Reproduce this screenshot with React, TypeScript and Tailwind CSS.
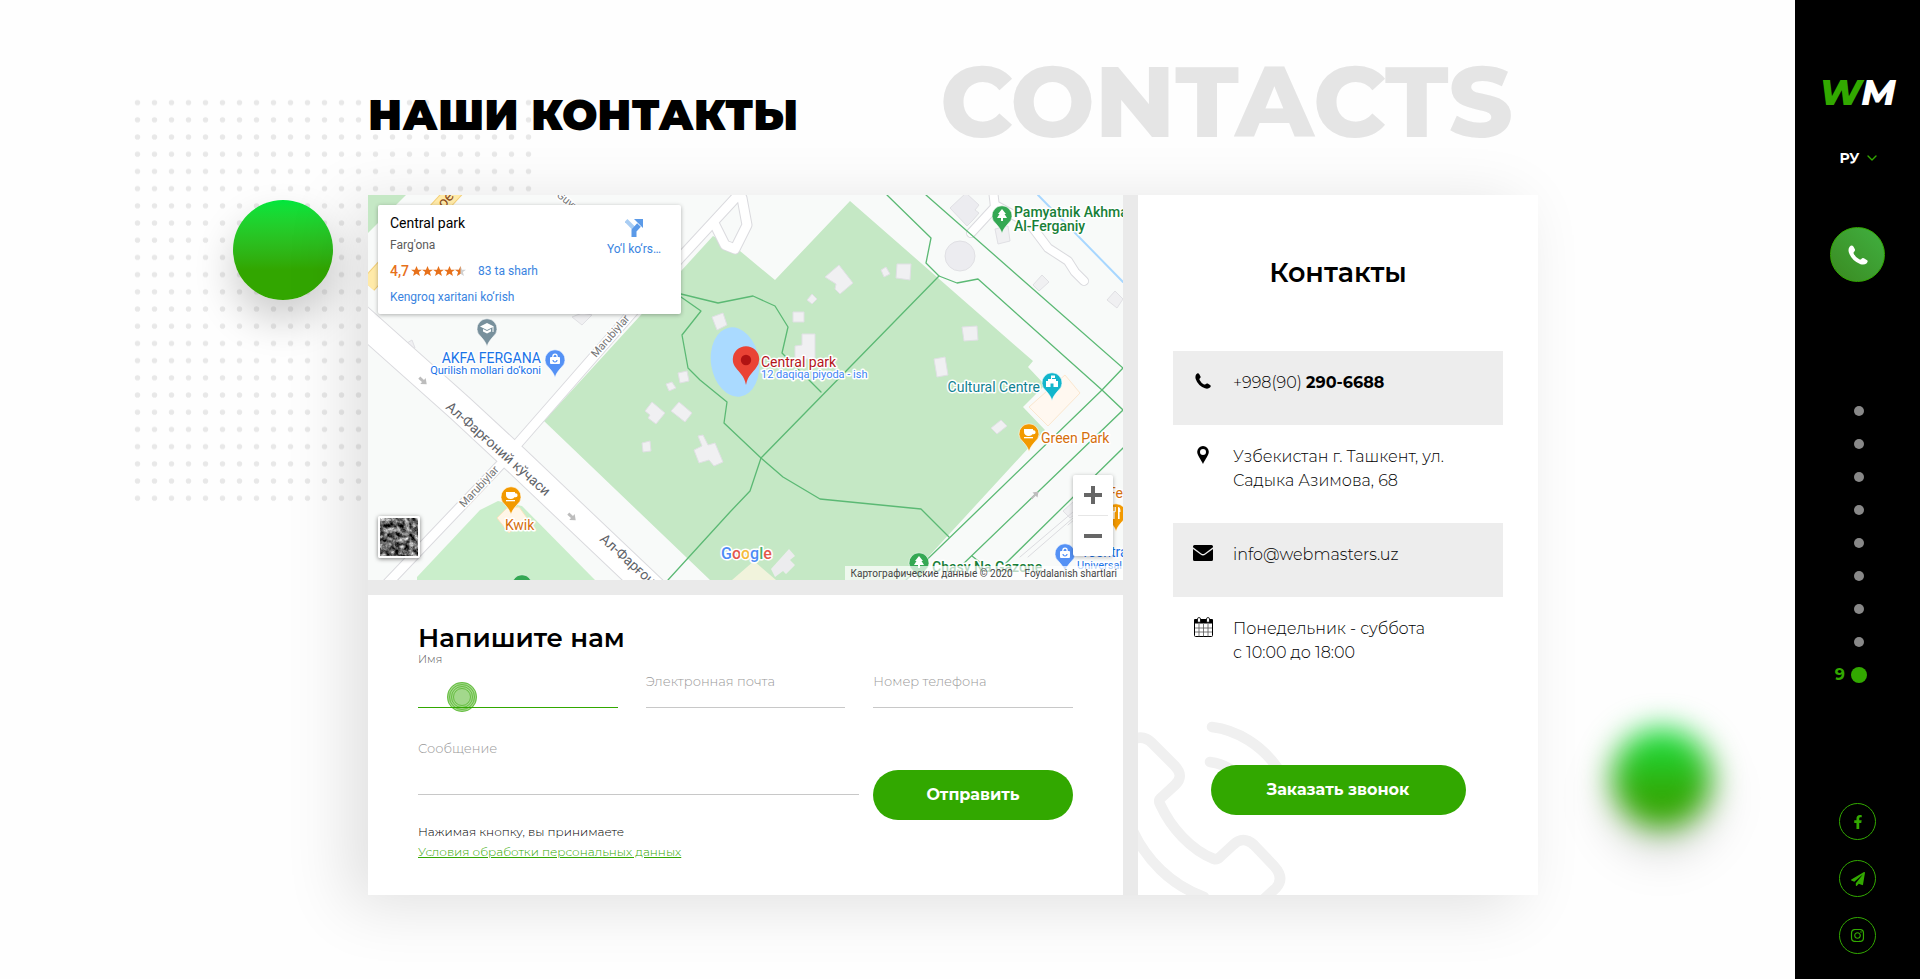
import React from "react";
import { FaFacebookF, FaInstagram, FaPaperPlane } from "react-icons/fa";
import { ChevronDown } from "lucide-react";

const GREEN_PATHS = [
  "313,99 350,108 385,101 407,111 420,132 414,158 453,197",
  "313,102 333,116 314,140 320,173 332,185 359,207 356,228 393,263",
  "393,263 415,282 452,304 553,314 581,342",
  "393,263 571,81",
  "393,263 382,296 362,317 300,385",
  "519,0 563,43 558,68 571,81 589,88 610,84 734,195 755,215",
  "558,0 755,173 734,195 538,385",
  "755,215 592,372",
  "604,361 619,373",
  "755,253 634,372",
];

const BUILDINGS = [
  "344,122 355,118 359,130 349,135",
  "310,178 319,176 321,186 312,188",
  "298,189 304,187 308,193 301,196",
  "277,216 284,207 297,218 288,229 280,223 282,220",
  "303,216 311,207 324,218 317,227",
  "274,248 282,246 283,256 275,257",
  "330,241 335,240 340,250 347,248 355,267 346,271 341,265 331,268 326,255 334,251",
  "457,82 471,70 485,88 472,99 467,94 468,89",
  "513,75 518,72 522,79 516,82",
  "529,69 543,69 542,85 528,83",
  "439,105 444,99 449,104 444,109",
  "425,117 436,117 436,127 425,127",
  "434,139 447,139 447,164 427,164 427,151 434,150",
  "594,132 609,131 610,145 596,146",
  "566,164 577,162 580,180 569,182",
  "623,233 633,225 639,231 629,239",
  "665,90 674,80 681,87 671,96",
  "739,105 747,96 755,104 749,113",
  "627,34 640,31 642,46 630,49",
  "39,148 44,145 47,153 41,155",
  "204,122 214,118 224,120 214,130",
];

const HALO = "stroke-white [paint-order:stroke] [stroke-linejoin:round] [stroke-width:3px]";

type PinKind = "cup" | "bag" | "tree" | "school" | "castle" | "food" | "none";

function Glyph({ kind }: { kind: PinKind }) {
  switch (kind) {
    case "cup":
      return (
        <g>
          <path d="M-5 -4h9v1.200h.6a1.700 1.700 0 0 1 0 4h-1.200a4 2.500 0 0 1-3.400 1.800 4.500 4 0 0 1-5-4z" fill="#fff" />
          <rect x="-5" y="4" width="9" height="1.300" fill="#fff" />
        </g>
      );
    case "bag":
      return (
        <g fill="none" stroke="#fff">
          <rect x="-5" y="-2" width="10" height="7" rx="1" fill="#fff" stroke="none" />
          <path d="M-2.200 -2a2.200 2.800 0 0 1 4.400 0" strokeWidth="1.300" />
          <path d="M-2 1a2 2 0 0 0 4 0" stroke="#5491f5" strokeWidth="1.200" />
        </g>
      );
    case "tree":
      return <path d="M0 -6 4 -1H2.500L5 3H1v3h-2V3h-4l2.500-4H-4z" fill="#fff" />;
    case "school":
      return (
        <g fill="#fff">
          <path d="M0 -5 7 -1.500 0 2 -7 -1.500z" />
          <path d="M-4 1v2.500L0 5.500l4-2V1L0 3z" />
          <rect x="5.500" y="-1" width="1" height="5" />
        </g>
      );
    case "castle":
      return <path d="M-6 5V-1h2v-2h3v-3.500H3V-4H0v1h4v2h2v6H1.500V1.500h-3V5z" fill="#fff" />;
    case "food":
      return <path d="M-4 -6v4.500l1.200 1V6h1.400V-.5l1.200-1V-6h-.8v4h-.6v-4h-.8v4h-.6v-4zM2 -6c2 0 2.500 2 2.500 5H3.600v7H2z" fill="#fff" />;
    default:
      return null;
  }
}

function Pin({ x, y, color, kind }: { x: number; y: number; color: string; kind: PinKind }) {
  return (
    <g transform={`translate(${x} ${y})`}>
      <path
        d="M0 18.500C-1.500 13.800-3.500 11.800-6.200 8.600A10 10 0 1 1 6.200 8.600C3.500 11.800 1.500 13.800 0 18.500z"
        fill={color}
        stroke="#fff"
        strokeWidth="0.600"
      />
      <Glyph kind={kind} />
    </g>
  );
}

function MapCanvas() {
  return (
    <svg
      viewBox="0 0 755 385"
      preserveAspectRatio="xMidYMid slice"
      className="block h-full w-full font-['Roboto',sans-serif] text-[14px]"
      role="img"
      aria-label="Central park"
    >
      <rect width="755" height="385" fill="#f8faf9" />
      <path d="M0 0H38L0 38z" fill="#c5e8c5" />
      <path d="M92 -8 0 92" transform="translate(0 -2)" stroke="#f3cf78" strokeWidth="17" />
      <path d="M92 -8 0 92" transform="translate(0 -2)" stroke="#ffeaa8" strokeWidth="15" />
      <path d="M176 226 345 41 372 56 407 85 482 6 665 166 660 172 677 190 655 212 677 235 539 385H342z" fill="#c5e8c5" />
      <path d="M49 382 112 315 130 306 154 311 227 385H49z" fill="#caeecb" />
      <path d="M364 385 386 366 408 385z" fill="#f1f3dc" />
      <path d="M403 374 421 354 427 361 422 365 427 370 418 379 415 376 407 382z" fill="#ececee" />
      <path d="M661 212 697 180 712 198 680 231z" fill="#fff8f0" stroke="#fbe7cf" />
      <path d="M129 323 139 313 151 312 159 323 141 338z" fill="#fff6e8" stroke="#fbe3bd" />
      <g fill="#f0f0f2" stroke="#e0e0e4">
        {BUILDINGS.map((p) => (
          <polygon key={p} points={p} />
        ))}
        <path d="M582 13 598 -2 611 10 607 15 611 18 605 25 599 31z" fill="#ececf0" />
        <circle cx="592" cy="61" r="15" fill="#ececf0" />
        <path d="M695 316 705 307 712 316 702 323z" />
      </g>
      <ellipse cx="367" cy="167" rx="24" ry="35" transform="rotate(-9 367 167)" fill="#aadaff" />

      <g fill="none" strokeLinejoin="round" strokeLinecap="round">
        <path d="M705 317 652 362M705 323 660 362M735 300 700 330" stroke="#dcdce0" />
        <path d="M625 -5 627 12 603 38M627 10 662 29 680 53 700 66 707 77 716 86" stroke="#dadade" strokeWidth="10" />
        <path d="M625 -5 627 12 603 38M627 10 662 29 680 53 700 66 707 77 716 86" stroke="#fff" strokeWidth="8" />
        <path d="M145 254 312 63 373 -3M347 30 357 50 367 54 379 30 374 3" stroke="#dadade" strokeWidth="11" />
        <path d="M136 266 18 390" stroke="#dadade" strokeWidth="11" />
        <path d="M-10 122 92 213 147 264 285 395" stroke="#dadade" strokeWidth="29" />
        <path d="M-10 122 92 213 147 264 285 395" stroke="#fff" strokeWidth="27" />
        <path d="M145 254 312 63 373 -3M347 30 357 50 367 54 379 30 374 3" stroke="#fff" strokeWidth="9" />
        <path d="M136 266 18 390" stroke="#fff" strokeWidth="9" />
        <path d="M670 0 755 87" stroke="#a8d7ff" strokeWidth="2" />
        <g stroke="#5bb974" strokeWidth="1.300">
          {GREEN_PATHS.map((p) => (
            <polyline key={p} points={p} />
          ))}
        </g>
      </g>
      <g fill="#bdbdbd">
        <path d="M-5-1.500H0V-4L5 0 0 4V1.500H-5z" transform="translate(55 186) rotate(42)" />
        <path d="M-5-1.500H0V-4L5 0 0 4V1.500H-5z" transform="translate(204 322) rotate(42)" />
        <path d="M-5-1H0V-3.500L5 0 0 3.500V1H-5z" transform="translate(667 300) rotate(-45)" />
      </g>

      <g fill="#5f6368" className={HALO}>
        <text transform="translate(77 213) rotate(41.500)">Ал-Фарғоний кўчаси</text>
        <text transform="translate(231 345) rotate(42)">Ал-Фарғоний кўчаси</text>
      </g>
      <g fill="#757575" className={HALO} fontSize="11">
        <text transform="translate(228 163) rotate(-49)">Marubiylar</text>
        <text transform="translate(96 313) rotate(-47)">Marubiylar</text>
        <text transform="translate(188 1) rotate(40)">Guyra</text>
      </g>
      <text transform="translate(76 14) rotate(-50)" fill="#8a4b1c" fontSize="15">ое</text>

      <g fill="#188038" fontWeight="500" className={HALO}>
        <text x="646" y="22">Pamyatnik Akhmad</text>
        <text x="646" y="36">Al-Ferganiy</text>
        <text x="564" y="377">Chasy Na Gazone</text>
      </g>
      <g fill="#1a73e8" textAnchor="end" className={HALO}>
        <text x="173" y="168">AKFA FERGANA</text>
        <text x="173" y="179" fontSize="11">Qurilish mollari do‘koni</text>
      </g>
      <g fill="#1a73e8" className={HALO}>
        <text x="713" y="362">Tsentralny</text>
        <text x="709" y="374" fontSize="11">Universal</text>
      </g>
      <g fill="#d56e0c" className={HALO}>
        <text x="137" y="335">Kwik</text>
        <text x="673" y="248">Green Park</text>
        <text x="740" y="303">Fe</text>
      </g>
      <text x="672" y="197" textAnchor="end" fill="#0f8291" className={HALO}>Cultural Centre</text>
      <text x="393" y="172" fill="#b3141a" className={HALO}>Central park</text>
      <text x="393" y="183" fill="#4285f4" fontSize="11" className={HALO}>12 daqiqa piyoda - ish</text>

      <Pin x={119} y={133} color="#78909c" kind="school" />
      <Pin x={187} y={164} color="#5491f5" kind="bag" />
      <Pin x={143} y={301} color="#f29900" kind="cup" />
      <Pin x={634} y={20} color="#34a853" kind="tree" />
      <Pin x={684} y={187} color="#12b5cb" kind="castle" />
      <Pin x={661} y={238} color="#f29900" kind="cup" />
      <Pin x={551} y={367} color="#34a853" kind="tree" />
      <Pin x={697} y={358} color="#5491f5" kind="bag" />
      <Pin x={748} y={318} color="#f29900" kind="food" />
      <Pin x={154} y={389} color="#34a853" kind="none" />
      <path d="M378 190C376 180 371.500 178 368 173A13.200 13.200 0 1 1 388 173C384.500 178 380 180 378 190z" fill="#ea4335" />
      <circle cx="378" cy="165" r="5.200" fill="#b11313" />

      <text x="353" y="364" fontSize="16" fontWeight="500" className={HALO}>
        <tspan fill="#4d8cf5">G</tspan><tspan fill="#e3584c">o</tspan><tspan fill="#f5bb3a">o</tspan><tspan fill="#4d8cf5">g</tspan><tspan fill="#4caf6b">l</tspan><tspan fill="#e3584c">e</tspan>
      </text>
    </svg>
  );
}

function Star({ half }: { half?: boolean }) {
  const d = "M6 0l1.700 4H12L8.600 6.700 9.800 11 6 8.400 2.200 11l1.200-4.300L0 4h4.300z";
  return (
    <svg viewBox="0 0 12 11" className="h-2.5 w-[11px]" aria-hidden="true">
      <path d={d} fill={half ? "#d0d0d0" : "#e7711b"} />
      {half && <path d="M6 0v8.400L2.200 11l1.200-4.300L0 4h4.300z" fill="#e7711b" />}
    </svg>
  );
}

function PlaceCard() {
  return (
    <div className="absolute top-2.5 left-2.5 flex h-[109px] w-[303px] justify-between rounded-[2px] bg-white pt-2 pr-5 pl-3 text-[12px] shadow-[0_1px_4px_rgba(0,0,0,0.3)]">
      <div>
        <p className="text-[14px] leading-5 text-black">Central park</p>
        <p className="mt-1 leading-4 text-[#5b5b5b]">Farg'ona</p>
        <p className="mt-2.5 flex items-center leading-4">
          <span className="mr-0.5 text-[14px] font-medium text-[#e7711b]">4,7</span>
          <Star />
          <Star />
          <Star />
          <Star />
          <Star half />
          <a href="#reviews" className="ml-3 text-[#3a84df]">83 ta sharh</a>
        </p>
        <a href="#map" className="mt-2.5 block leading-4 text-[#3a84df]">Kengroq xaritani ko‘rish</a>
      </div>
      <a href="#route" className="flex flex-col items-center pt-1.5 text-[#3a84df]">
        <svg viewBox="0 0 18 18" className="size-[18px]" aria-hidden="true">
          <path d="M1 1.500 8.500 9" stroke="#a9cdf3" strokeWidth="4" />
          <path d="M9 18V11.500L14 6" fill="none" stroke="#5b9ae8" strokeWidth="5" />
          <path d="M9 0h9v9z" fill="#5b9ae8" />
        </svg>
        <span className="mt-1 leading-4">Yo‘l ko‘rs…</span>
      </a>
    </div>
  );
}

function MapPanel() {
  return (
    <div className="relative h-[385px] overflow-hidden font-['Roboto',sans-serif]">
      <MapCanvas />
      <PlaceCard />
      <button
        type="button"
        aria-label="Satellite"
        className="absolute bottom-[22px] left-2.5 size-[42px] overflow-hidden rounded-[2px] border-2 border-white shadow-[0_1px_4px_rgba(0,0,0,0.5)]"
      >
        <svg viewBox="0 0 38 38" className="size-full" aria-hidden="true">
          <filter id="terrain" colorInterpolationFilters="sRGB">
            <feTurbulence type="fractalNoise" baseFrequency="0.2" numOctaves="4" seed="5" />
            <feColorMatrix values="1.500 0 0 0 -0.350 1.500 0 0 0 -0.350 1.500 0 0 0 -0.350 0 0 0 0 1" />
          </filter>
          <rect width="38" height="38" filter="url(#terrain)" />
        </svg>
      </button>
      <div className="absolute right-2.5 bottom-6 flex w-10 flex-col items-center rounded-[2px] bg-white shadow-[0_1px_4px_rgba(0,0,0,0.3)]">
        <button type="button" aria-label="Zoom in" className="flex size-10 items-center justify-center">
          <svg viewBox="0 0 18 18" className="size-[18px]" aria-hidden="true">
            <path d="M7 0h4v7h7v4h-7v7H7v-7H0V7h7z" fill="#666" />
          </svg>
        </button>
        <span className="h-px w-[30px] bg-[#e6e6e6]" />
        <button type="button" aria-label="Zoom out" className="flex size-10 items-center justify-center">
          <span className="h-1 w-[18px] bg-[#666]" />
        </button>
      </div>
      <p className="absolute right-0 bottom-0 flex h-3.5 items-center gap-3 bg-white/70 px-1.5 text-[10px] text-[#444]">
        <span>Картографические данные © 2020</span>
        <a href="#terms">Foydalanish shartlari</a>
      </p>
    </div>
  );
}

function Field({ id, label, type }: { id: string; label: string; type: string }) {
  return (
    <div className="flex flex-col">
      <label htmlFor={id} className="text-[13px] leading-4 font-light text-[#999]">
        {label}
      </label>
      <input id={id} type={type} className="h-[19px] w-full border-b border-[#c8c8c8] bg-transparent outline-none" />
    </div>
  );
}

function ContactForm() {
  return (
    <form className="flex-1 bg-white px-[50px] pt-[29px] pb-8" onSubmit={(e) => e.preventDefault()}>
      <h2 className="text-[26px] leading-7 font-semibold text-black">Напишите нам</h2>
      <div className="grid grid-cols-3 items-end gap-x-7">
        <div className="relative flex flex-col">
          <label htmlFor="name" className="text-[11px] leading-[14px] font-light text-[#555]">
            Имя
          </label>
          <input id="name" type="text" className="h-[42px] w-full border-b border-[#32a800] bg-transparent outline-none" />
          <svg viewBox="0 0 30 30" className="absolute -bottom-1 left-[29px] size-[30px]" aria-hidden="true">
            <circle cx="15" cy="15" r="15" fill="#32a800" fillOpacity="0.450" />
            <g fill="none" stroke="#32a800" strokeOpacity="0.600" strokeWidth="0.900">
              <circle cx="15" cy="15" r="14.500" />
              <circle cx="15" cy="15" r="12.500" />
              <circle cx="15" cy="15" r="10.500" />
              <circle cx="15" cy="15" r="8.500" />
            </g>
          </svg>
        </div>
        <Field id="email" label="Электронная почта" type="email" />
        <Field id="phone" label="Номер телефона" type="tel" />
      </div>
      <div className="mt-8 flex items-end gap-3.5">
        <div className="flex flex-1 flex-col self-start">
          <label htmlFor="message" className="text-[13px] leading-4 font-light text-[#999]">
            Сообщение
          </label>
          <textarea id="message" rows={1} className="h-[39px] resize-none border-b border-[#c8c8c8] bg-transparent outline-none" />
        </div>
        <button type="submit" className="mt-[30px] h-[50px] w-[200px] rounded-full bg-[#32a800] text-[16px] font-bold text-white">
          Отправить
        </button>
      </div>
      <p className="mt-0.5 text-[12px] leading-5 font-light text-black">
        Нажимая кнопку, вы принимаете
        <br />
        <a href="#policy" className="text-[#32a800] underline">
          Условия обработки персональных данных
        </a>
      </p>
    </form>
  );
}

function ContactRow({ icon, shaded, children }: { icon: React.ReactNode; shaded?: boolean; children: React.ReactNode }) {
  return (
    <li className={`flex pt-5 pb-[30px] text-[16px] leading-6 font-light text-black ${shaded ? "bg-[#ededed]" : ""}`}>
      <span className="flex h-5 w-[60px] shrink-0 items-center justify-center text-black">{icon}</span>
      <span>{children}</span>
    </li>
  );
}

function HandsetIcon({ className }: { className: string }) {
  return (
    <svg viewBox="0 0 16 16" className={className} fill="currentColor" aria-hidden="true">
      <path d="M1.300 1.300Q3 -.5 4.300 1.200L5.500 3.400Q6 4.600 4.700 5.500Q4.200 6.100 4.600 7Q6 9.900 9 11.400Q9.900 11.800 10.500 11.300Q11.600 10 12.700 10.600L15 12Q16.500 12.900 15 14.500Q13 16.300 10 15.300Q3 12.800 .700 6Q-.100 3 1.300 1.300z" />
    </svg>
  );
}

function PinIcon() {
  return (
    <svg viewBox="0 0 12 18" className="h-[18px] w-3" aria-hidden="true">
      <path fillRule="evenodd" d="M6 0a5.800 5.800 0 0 1 5.800 5.800C11.800 9.500 8 13.500 6 18 4 13.500.2 9.500.2 5.800A5.800 5.800 0 0 1 6 0zm0 3a3 3 0 1 0 0 6 3 3 0 0 0 0-6z" />
    </svg>
  );
}

function MailIcon() {
  return (
    <svg viewBox="0 0 20 16" className="h-4 w-5" aria-hidden="true">
      <path d="M0 1.500Q0 0 1.500 0h17Q20 0 20 1.500v.8l-8.300 6.200q-1.700 1.200-3.400 0L0 2.300z" />
      <path d="M0 4 7.600 9.600q2.400 1.700 4.800 0L20 4v10.500q0 1.500-1.500 1.500h-17Q0 16 0 14.500z" />
    </svg>
  );
}

function CalendarIcon() {
  return (
    <svg viewBox="0 0 19 20" className="h-5 w-[19px]" aria-hidden="true">
      <rect x="0.500" y="3" width="18" height="16.500" rx="1" fill="#fff" stroke="#000" />
      <path d="M0 6.500V3q0-1 1-1h17q1 0 1 1v3.500z" />
      <path d="M5 7v12.500M9.500 7v12.500M14 7v12.500M1 11h17M1 15h17" stroke="#555" strokeWidth="0.800" />
      <rect x="3.500" y="0.500" width="3" height="5" rx="1.500" fill="#fff" stroke="#000" strokeWidth="0.800" />
      <rect x="12.500" y="0.500" width="3" height="5" rx="1.500" fill="#fff" stroke="#000" strokeWidth="0.800" />
    </svg>
  );
}

function ContactsCard() {
  return (
    <aside className="relative w-[400px] shrink-0 overflow-hidden bg-white px-[35px] pt-[62px] pb-20">
      <svg viewBox="0 0 160 180" className="absolute bottom-0 left-0 h-[180px] w-40" aria-hidden="true">
        <g fill="none" stroke="#f0f0f0" strokeWidth="10.500" strokeLinecap="round" strokeLinejoin="round">
          <path d="M-4 24Q6 20 14 28L36 50Q47 61 37 70L24 82Q20 85 22 89C33 113 53 135 76 144Q79 145 82 142L95 130Q105 120 116 130L136 151Q147 163 138 173L126 184" />
          <path d="M-6 114C8 145 33 170 66 182" />
          <path d="M74 12C99 15 124 30 141 55" />
          <path d="M72 47C80 48 88 51 95 56" />
        </g>
      </svg>
      <div className="relative">
        <h2 className="text-center text-[27px] leading-8 font-semibold text-black">Контакты</h2>
        <ul className="mt-[62px]">
          <ContactRow shaded icon={<HandsetIcon className="size-4" />}>
            +998(90) <b className="font-bold text-black">290-6688</b>
          </ContactRow>
          <ContactRow icon={<PinIcon />}>
            Узбекистан г. Ташкент, ул.
            <br />
            Садыка Азимова, 68
          </ContactRow>
          <ContactRow shaded icon={<MailIcon />}>
            info@webmasters.uz
          </ContactRow>
          <ContactRow icon={<CalendarIcon />}>
            Понедельник - суббота
            <br />с 10:00 до 18:00
          </ContactRow>
        </ul>
        <button type="button" className="mx-auto mt-[70px] block h-[50px] w-[255px] rounded-full bg-[#32a800] text-[16px] font-bold text-white">
          Заказать звонок
        </button>
      </div>
    </aside>
  );
}

function Sidebar() {
  const social = [
    { label: "Facebook", icon: <FaFacebookF className="size-3.5" /> },
    { label: "Telegram", icon: <FaPaperPlane className="size-3.5" /> },
    { label: "Instagram", icon: <FaInstagram className="size-[15px]" /> },
  ];
  return (
    <div className="flex w-[125px] shrink-0 flex-col items-center bg-black pt-[76px] pb-6">
      <a href="#home" className="text-[36px] leading-8 font-extrabold text-white italic">
        <span className="text-[#32a800]">W</span>M
      </a>
      <div className="relative mt-[38px] flex items-center text-white">
        <select aria-label="Язык" className="h-6 w-9 appearance-none bg-transparent text-[14px] font-bold outline-none">
          <option>РУ</option>
        </select>
        <ChevronDown className="pointer-events-none absolute -right-1 size-4 text-[#32a800]" strokeWidth={2} />
      </div>
      <button
        type="button"
        aria-label="Позвонить"
        className="mt-[57px] flex size-[55px] items-center justify-center rounded-full border border-[#32a800] bg-linear-to-tr from-[#3a8a20] to-[#40b040] text-white"
      >
        <HandsetIcon className="size-5" />
      </button>
      <nav className="mt-28 flex flex-col pl-[3px]" aria-label="Разделы">
        {[1, 2, 3, 4, 5, 6, 7, 8].map((n) => (
          <a key={n} href={`#section-${n}`} aria-label={`Раздел ${n}`} className="flex h-[33px] w-4 items-center justify-center">
            <span className="size-2.5 rounded-full bg-[#888]" />
          </a>
        ))}
        <a href="#section-9" className="relative flex h-[33px] w-4 items-center justify-center">
          <span className="absolute right-full mr-1.5 text-[16px] font-bold text-[#32a800]">9</span>
          <span className="size-4 rounded-full bg-[#32a800]" />
        </a>
      </nav>
      <div className="mt-28 flex flex-col gap-5">
        {social.map((s) => (
          <a
            key={s.label}
            href={`#${s.label.toLowerCase()}`}
            aria-label={s.label}
            className="flex size-[37px] items-center justify-center rounded-full border border-[#32a800] text-[#32a800]"
          >
            {s.icon}
          </a>
        ))}
      </div>
    </div>
  );
}

function Backdrop() {
  return (
    <div className="pointer-events-none absolute inset-0 overflow-hidden" aria-hidden="true">
      <svg className="absolute top-[94px] left-[129px] h-[412px] w-[408px]">
        <pattern id="dots" width="17" height="17.200" patternUnits="userSpaceOnUse">
          <circle cx="8.500" cy="8.600" r="2.700" fill="#e8e8e8" />
        </pattern>
        <rect width="408" height="412" fill="url(#dots)" />
      </svg>
      <div className="absolute top-[200px] left-[233px] size-[100px] rounded-full bg-linear-to-b from-[#00e63c] to-[#32a600] to-70% shadow-[0_20px_40px_rgba(0,0,0,0.2)]" />
      <div className="absolute top-[728px] right-[83px] size-[100px] rounded-full bg-linear-to-b from-[#00e63c] to-[#32a600] to-70% shadow-[0_20px_40px_rgba(0,0,0,0.2)] blur-[15px]" />
    </div>
  );
}

export default function App() {
  return (
    <div className="flex min-h-screen bg-[#fefefe] font-['Montserrat','Inter',sans-serif]">
      <main className="relative flex-1 pl-[111px]">
        <Backdrop />
        <div className="relative mx-auto w-full max-w-[1170px] pb-20">
          <header className="flex h-[195px] items-start justify-between pt-[51px] pr-[25px]">
            <h1 className="mt-10 text-[42px] leading-[48px] font-black whitespace-nowrap text-black">НАШИ КОНТАКТЫ</h1>
            <span className="text-[100px] leading-[100px] font-extrabold text-[#e5e5e5]">CONTACTS</span>
          </header>
          <div className="flex gap-[15px] bg-[#eaeaea] shadow-[-20px_10px_60px_rgba(0,0,0,0.12)]">
            <div className="flex min-w-0 flex-1 flex-col gap-[15px]">
              <MapPanel />
              <ContactForm />
            </div>
            <ContactsCard />
          </div>
        </div>
      </main>
      <Sidebar />
    </div>
  );
}
